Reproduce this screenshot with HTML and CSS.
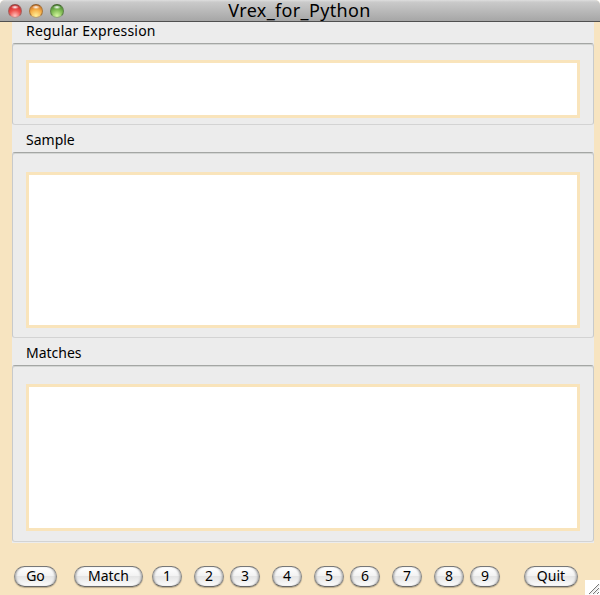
FILE: index.html
```html
<!DOCTYPE html>
<html lang="en">
<head>
<meta charset="utf-8">
<title>Vrex_for_Python</title>
<link rel="stylesheet" href="styles.css">
</head>
<body>
<div class="window">
  <header class="titlebar">
    <div class="lights">
      <span class="light red"></span>
      <span class="light amber"></span>
      <span class="light green"></span>
    </div>
    <h1 class="title">Vrex_for_Python</h1>
  </header>
  <main class="panels">
    <section class="group expression">
      <h2 class="label">Regular Expression</h2>
      <div class="box"><div class="field"></div></div>
    </section>
    <section class="group sample">
      <h2 class="label">Sample</h2>
      <div class="box"><div class="field"></div></div>
    </section>
    <section class="group matches">
      <h2 class="label">Matches</h2>
      <div class="box"><div class="field"></div></div>
    </section>
  </main>
  <footer class="toolbar">
    <button class="btn go">Go</button>
    <button class="btn match">Match</button>
    <button class="btn num first">1</button>
    <div class="pair"><button class="btn num">2</button><button class="btn num">3</button></div>
    <button class="btn num">4</button>
    <div class="pair"><button class="btn num">5</button><button class="btn num">6</button></div>
    <button class="btn num">7</button>
    <div class="pair"><button class="btn num">8</button><button class="btn num">9</button></div>
    <button class="btn quit">Quit</button>
  </footer>
  <svg class="grip" width="15" height="15" viewBox="0 0 15 15">
    <rect width="15" height="15" fill="#fff"/>
    <path d="M4 14L14 4M8 14L14 8M12 14L14 12" stroke="#777" stroke-width="1" fill="none"/>
    <path d="M5 14.5L15 4.5M9 14.5L15 8.5" stroke="#ccc" stroke-width=".7" fill="none"/>
  </svg>
</div>
</body>
</html>
```
FILE: styles.css
```css
* { box-sizing: border-box; }
body {
  margin: 0;
  background: #fff;
  font-family: "Noto Sans", "Open Sans", sans-serif;
  color: #000;
}
.window {
  position: relative;
  width: 600px;
  height: 595px;
  display: flex;
  flex-direction: column;
  background: #f7e4c0;
  border-radius: 5px 5px 0 0;
}
.titlebar {
  height: 22px;
  display: grid;
  grid-template-columns: 100px 1fr 100px;
  background: linear-gradient(#dedede 0, #cacaca 10%, #a6a6a6 100%);
  border-bottom: 1px solid #505050;
  border-radius: 5px 5px 0 0;
}
.lights { display: flex; gap: 7px; padding: 4px 0 0 8px; }
.light {
  width: 14px;
  height: 14px;
  border-radius: 50%;
  border: 1px solid;
}
.red {
  border-color: #8e4c48 #a3605c #bd9391;
  background: radial-gradient(ellipse 4px 2px at 50% 18%, #fff 0, #ffffff00 100%), radial-gradient(circle at 50% 90%, #ffc4be 0, #ee5550 45%, #c41f22 90%);
}
.amber {
  border-color: #8e602e #a97638 #b9a07b;
  background: radial-gradient(ellipse 4px 2px at 50% 18%, #fff 0, #ffffff00 100%), radial-gradient(circle at 50% 90%, #fff09a 0, #f6b34c 48%, #c96821 90%);
}
.green {
  border-color: #45652f #5f8248 #91a681;
  background: radial-gradient(ellipse 4px 2px at 50% 18%, #fff 0, #ffffff00 100%), radial-gradient(circle at 50% 90%, #d5f7a0 0, #82bd55 48%, #40812c 90%);
}
.title {
  margin: 0 0 0 -1px;
  text-align: center;
  font-size: 18px;
  font-weight: 400;
  letter-spacing: .35px;
  line-height: 21px;
  white-space: nowrap;
}
.panels { width: 582px; margin-left: 12px; background: #ececec; }
.group { display: flex; flex-direction: column; }
.expression { height: 104px; }
.sample { height: 213px; }
.matches { height: 204px; }
.label {
  flex: none;
  margin: 0;
  padding-left: 14px;
  height: 26px;
  font-size: 14px;
  font-weight: 400;
  line-height: 27px;
}
.expression .label { height: 21px; line-height: 18px; letter-spacing: .2px; }
.sample .label, .matches .label { padding-top: 0; }
.box {
  flex: 1;
  display: flex;
  margin-bottom: 1px;
  padding: 16px 13px 6px;
  border: 1px solid #c8cacb;
  border-top-color: #a4a6a4;
  border-bottom-color: #d3d3d3;
  border-radius: 3px;
  box-shadow: inset 0 1px 0 #d3d5d3;
}
.sample .box { padding: 19px 13px 9px; }
.matches .box { padding: 18px 13px 10px; margin-bottom: 1px; }
.field { flex: 1; background: #fff; border: 3px solid #f9e4bb; }
.toolbar { display: flex; gap: 12px; padding: 23px 0 0 14px; }
.pair { display: flex; gap: 6px; }
.btn {
  height: 21px;
  padding: 0 0 2px;
  border: 1px solid #777;
  border-color: #777 #888 #666;
  border-radius: 10.5px;
  background: linear-gradient(#fff 0, #f3f3f3 45%, #e5e5e5 50%, #fcfcfc 100%);
  box-shadow: inset 2px 0 2px -1px #aaa, inset -2px 0 2px -1px #aaa, 0 1px 1px #b9a98b;
  font-family: inherit;
  font-size: 14px;
  line-height: 17px;
  color: #000;
  text-align: center;
}
.go { width: 43px; margin-right: 5px; }
.match { width: 69px; margin-right: -3px; }
.num { width: 30px; }
.quit { width: 54px; margin-left: 12px; }
.grip { position: absolute; right: 0; bottom: 0; }
```
